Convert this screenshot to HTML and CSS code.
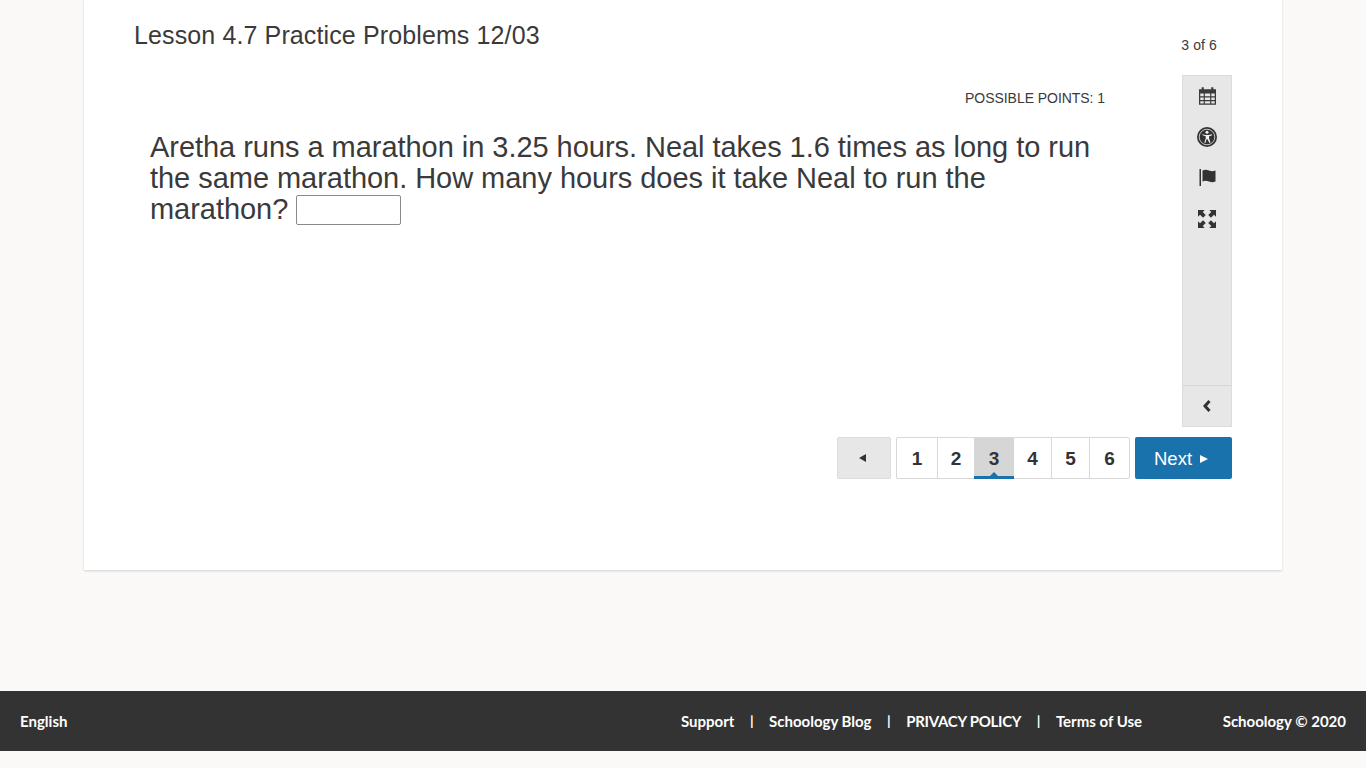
FILE: index.html
```html
<!DOCTYPE html>
<html lang="en">
<head>
<meta charset="utf-8">
<title>Lesson 4.7 Practice Problems 12/03</title>
<link rel="stylesheet" href="styles.css">
</head>
<body>
<main class="card">
  <header class="head">
    <h1 class="title">Lesson 4.7 Practice Problems 12/03</h1>
    <div class="count">3 of 6</div>
  </header>
  <div class="content">
    <section class="question">
      <div class="points">POSSIBLE POINTS: 1</div>
      <p class="prompt">Aretha runs a marathon in 3.25 hours. Neal takes 1.6 times as long to run the same marathon. How many hours does it take Neal to run the marathon? <input class="answer" type="text" aria-label="Answer"></p>
    </section>
    <aside class="tools">
      <div class="tool-list">
        <button class="tool" aria-label="Calendar"><svg width="17" height="18" viewBox="1 1 16 16.500"><path fill="#3a3a3a" fill-rule="evenodd" d="M1 3h2.500V1h2v2h7V1h2v2H17v14.500H1zM2.200 7v2.500h3.200V7zm4.300 0v2.500h5V7zm6.100 0v2.500h3.200V7zM2.200 10.600v2.400h3.200v-2.400zm4.300 0v2.400h5v-2.400zm6.100 0v2.400h3.200v-2.400zM2.200 14.100v2.300h3.200v-2.300zm4.300 0v2.300h5v-2.300zm6.100 0v2.300h3.200v-2.300z"/></svg></button>
        <button class="tool" aria-label="Accessibility"><svg width="20" height="20" viewBox="0 0 20 20"><circle cx="10" cy="10" r="10" fill="#333"/><circle cx="10" cy="10" r="7.800" fill="none" stroke="#e8e8e8" stroke-width=".8"/><circle cx="10" cy="5.300" r="1.500" fill="#f2f2f2"/><path fill="#f2f2f2" d="M5.200 7.300l3 .8h3.600l3-.8.300 1-3 .9v2.300l1.400 4-1 .4L10.300 12h-.6l-1.400 3.900-1-.4 1.400-4V9.200l-3-.9z"/></svg></button>
        <button class="tool" aria-label="Flag"><svg width="17" height="17" viewBox="0 0 17 17"><path fill="#333" d="M0 0h1.500v17H0zM3 1.500c2.200-1 4-.9 6.500 0s4 .8 6.500 0v11c-2.500.9-4 .9-6.500 0s-4.300-1-6.500 0z" transform="translate(.5 0)"/></svg></button>
        <button class="tool" aria-label="Fullscreen"><svg width="18" height="18" viewBox="1 1 16 16"><path fill="#333" d="M1 1h6L5.200 2.800 7.900 5.500 5.500 7.900 2.800 5.200 1 7zM17 1v6l-1.800-1.800-2.700 2.700-2.400-2.400 2.700-2.700L11 1zM1 17v-6l1.800 1.800 2.700-2.700 2.400 2.400-2.700 2.700L7 17zM17 17h-6l1.800-1.800-2.700-2.700 2.400-2.400 2.700 2.700L17 11z"/></svg></button>
      </div>
      <button class="collapse" aria-label="Collapse"><svg width="10" height="14" viewBox="0 0 10 14"><path fill="none" stroke="#333" stroke-width="3" d="M7.500 2L3 7l4.500 5"/></svg></button>
    </aside>
  </div>
  <nav class="pager">
    <button class="prev" aria-label="Previous"><span class="tri-left"></span></button>
    <div class="pages">
      <a class="page">1</a>
      <a class="page narrow">2</a>
      <a class="page current">3</a>
      <a class="page narrow">4</a>
      <a class="page">5</a>
      <a class="page">6</a>
    </div>
    <button class="next">Next<span class="tri-right"></span></button>
  </nav>
</main>
<footer class="footer">
  <div class="lang">English</div>
  <div class="links">
    <a>Support</a><span class="sep">|</span><a>Schoology Blog</a><span class="sep">|</span><a class="policy">PRIVACY POLICY</a><span class="sep">|</span><a>Terms of Use</a>
  </div>
  <div class="copy">Schoology © 2020</div>
</footer>
</body>
</html>
```
FILE: styles.css
```css
* { box-sizing: border-box; }
html, body { margin: 0; height: 100%; }
body {
  background: #faf9f7;
  font-family: "Liberation Sans", Arial, sans-serif;
  color: #333;
  min-height: 768px;
  overflow: hidden;
}
.card {
  width: 1198px;
  height: 570px;
  margin: 0 auto 121px;
  background: #fff;
  box-shadow: 0 1px 2px rgba(0,0,0,.16);
  padding: 0 50px;
}
.head {
  height: 75px;
  display: flex;
  justify-content: space-between;
}
.title {
  margin: 20px 0 0;
  font-size: 25px;
  font-weight: 400;
  line-height: 30px;
  letter-spacing: .12px;
  color: #3a3a3a;
}
.count {
  margin: 37px 15px 0 0;
  font-size: 14px;
  line-height: 16px;
  letter-spacing: .1px;
  color: #3a3a3a;
}
.content {
  display: flex;
  justify-content: space-between;
  height: 352px;
}
.question { width: 971px; }
.points {
  text-align: right;
  font-size: 14px;
  line-height: 16px;
  padding-top: 15px;
  letter-spacing: -.05px;
  color: #3a3a3a;
}
.prompt {
  margin: 26px 0 0 16px;
  width: 960px;
  font-size: 29px;
  line-height: 31px;
  letter-spacing: -.04px;
  color: #3a3a3a;
}
.answer {
  width: 105px;
  height: 30px;
  border: 1px solid #8a8a8a;
  border-radius: 2px;
  background: #fff;
  vertical-align: top;
  margin: 1px 0 0;
  padding: 0;
}
.tools {
  width: 50px;
  background: #e7e7e7;
  border: 1px solid #dcdcdc;
  display: flex;
  flex-direction: column;
}
.tool-list {
  flex: 1;
  margin-top: -1px;
  display: flex;
  flex-direction: column;
}
.tool {
  height: 41px;
  border: 0;
  background: none;
  padding: 0;
  display: flex;
  align-items: center;
  justify-content: center;
}
.collapse {
  height: 41px;
  border: 0;
  border-top: 1px solid #d6d6d6;
  background: none;
  padding: 0 1px 0 0;
  display: flex;
  align-items: center;
  justify-content: center;
}
.pager {
  margin-top: 10px;
  display: flex;
  justify-content: flex-end;
  height: 42px;
}
.prev {
  width: 54px;
  background: #e7e7e7;
  border: 1px solid #dcdcdc;
  border-radius: 2px;
  padding: 0;
  display: flex;
  align-items: center;
  justify-content: center;
}
.tri-left {
  width: 0;
  height: 0;
  border-style: solid;
  border-width: 4px 7px 4px 0;
  border-color: transparent #333 transparent transparent;
  margin-right: 3px;
}
.pages {
  display: flex;
  width: 234px;
  margin-left: 5px;
  border: 1px solid #d8d8d8;
  border-radius: 2px;
  background: #fff;
}
.page {
  width: 38px;
  display: flex;
  align-items: center;
  justify-content: center;
  padding-top: 1px;
  font-size: 19px;
  font-weight: 700;
  color: #333;
  border-left: 1px solid #d8d8d8;
  position: relative;
}
.page:first-child { border-left: 0; width: 40px; }
.page:last-child { flex: 1; }
.narrow { width: 37px; }
.current {
  background: #d6d6d6;
  border-left: 0;
  width: 40px;
  margin-bottom: -1px;
  border-bottom: 3px solid #1a72ad;
  padding-top: 3px;
}
.current::after {
  content: "";
  position: absolute;
  left: 50%;
  bottom: 0;
  margin-left: -4px;
  border-style: solid;
  border-width: 0 4px 4px;
  border-color: transparent transparent #1a72ad;
}
.current + .page { border-left: 0; }
.next {
  width: 97px;
  margin-left: 5px;
  background: #1a72ad;
  color: #fff;
  border: 0;
  border-radius: 2px;
  font-family: inherit;
  font-size: 18.500px;
  display: flex;
  align-items: center;
  padding: 1px 0 0 19px;
}
.tri-right {
  width: 0;
  height: 0;
  border-style: solid;
  border-width: 4px 0 4px 8px;
  border-color: transparent transparent transparent #fff;
  margin-left: 8px;
}
.footer {
  height: 60px;
  background: #333;
  color: #fff;
  font-family: Lato, "Noto Sans", sans-serif;
  font-size: 15px;
  font-weight: 700;
  display: flex;
  align-items: center;
  padding: 0 20px 1px;
}
.lang { width: 661px; flex: none; }
.links { display: flex; flex: none; width: 480px; }
.policy { letter-spacing: -.28px; }
.sep { margin: 0 15.500px; font-size: 14px; }
.copy { margin-left: auto; white-space: nowrap; }
```
